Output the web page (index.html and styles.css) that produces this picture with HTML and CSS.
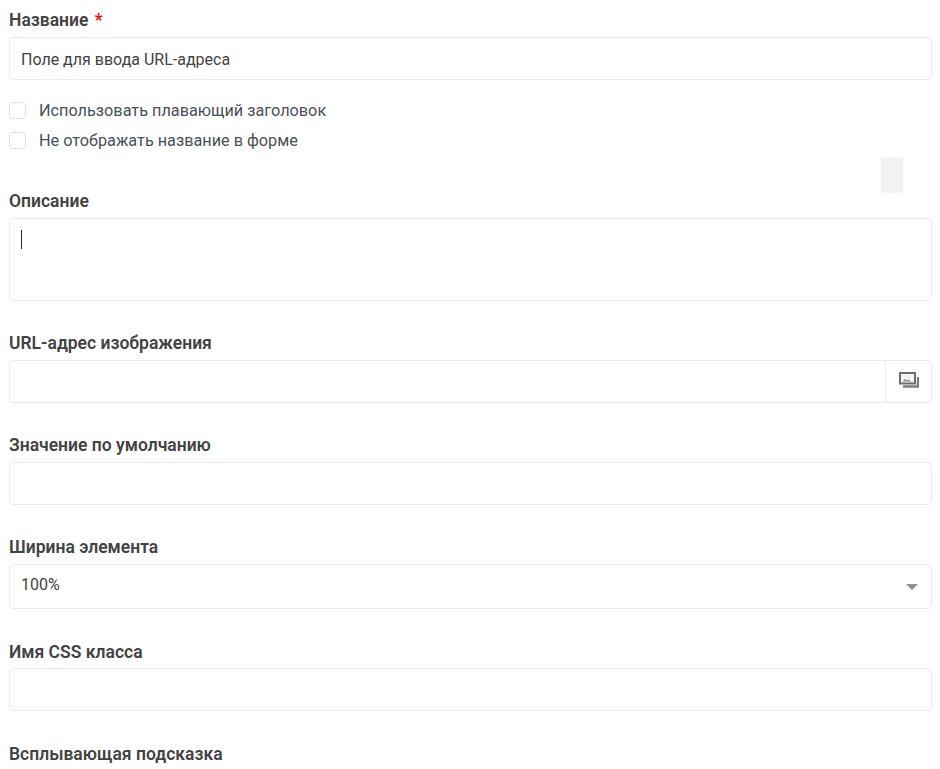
FILE: index.html
```html
<!DOCTYPE html>
<html lang="ru">
<head>
<meta charset="UTF-8" />
<meta name="viewport" content="width=device-width, initial-scale=1" />
<title>Поле для ввода URL-адреса</title>
<link rel="stylesheet" href="styles.css">
</head>
<body>

<form class="settings-form">
  <div class="field field-name">
    <label class="field-label">Название <span class="required">*</span></label>
    <div class="control">Поле для ввода URL-адреса</div>
  </div>

  <div class="check-group">
    <label class="check-row"><span class="check-box"></span>Использовать плавающий заголовок</label>
    <label class="check-row"><span class="check-box"></span>Не отображать название в форме</label>
  </div>

  <div class="field">
    <label class="field-label">Описание</label>
    <div class="control control-area"><span class="caret"></span></div>
  </div>

  <div class="field">
    <label class="field-label">URL-адрес изображения</label>
    <div class="control control-addon">
      <span class="addon-fill"></span>
      <span class="addon-btn">
        <svg width="20" height="16" viewBox="0 0 20 16" aria-hidden="true">
          <path d="M4 14.5h15V5" fill="none" stroke="#7d7d7d" stroke-width="2.4"/>
          <rect x="1" y="1" width="15" height="10.5" fill="#f4f4f4" stroke="#6f6f6f" stroke-width="2"/>
          <path d="M3.5 9.5l2.5-2.5 2 1.5 1.5-1 3 2z" fill="#8a8a8a"/>
        </svg>
      </span>
    </div>
  </div>

  <div class="field">
    <label class="field-label">Значение по умолчанию</label>
    <div class="control"></div>
  </div>

  <div class="field">
    <label class="field-label">Ширина элемента</label>
    <div class="control control-select">100%<span class="select-arrow"></span></div>
  </div>

  <div class="field field-css">
    <label class="field-label">Имя CSS класса</label>
    <div class="control"></div>
  </div>

  <div class="field">
    <label class="field-label">Всплывающая подсказка</label>
  </div>
</form>

<div class="drag-ghost"></div>

</body>
</html>
```

FILE: styles.css
```css
html, body {
  height: 769px;
  overflow: hidden;
}
body {
  margin: 0;
  background: #fff;
  font-family: Roboto, "Liberation Sans", sans-serif;
  color: #495057;
  position: relative;
}
.settings-form {
  padding: 8px 8px 0 9px;
}
.field {
  margin-bottom: 30px;
}
.field-name {
  margin-bottom: 0;
}
.field-label {
  display: block;
  height: 24px;
  line-height: 24px;
  margin-bottom: 5px;
  font-size: 17.5px;
  font-weight: 600;
  color: #434343;
}
.field-css {
  margin-bottom: 31px;
}
.field-css .field-label {
  padding-top: 1px;
  margin-bottom: 4px;
}
.required {
  color: #f00;
  margin-left: 2px;
}
.control {
  box-sizing: border-box;
  height: 43px;
  line-height: 43px;
  padding: 0 11px;
  border: 1px solid #e9ebf0;
  border-radius: 4px;
  font-size: 16px;
  color: #434343;
  background: #fff;
}
.control-area {
  height: 83px;
  padding-top: 11px;
  line-height: 1;
}
.caret {
  display: block;
  width: 1px;
  height: 19px;
  background: #222;
}
.control-addon {
  display: flex;
  padding: 0;
}
.addon-fill {
  flex: 1;
}
.addon-btn {
  width: 44px;
  padding: 0 0 3px 1px;
  display: flex;
  align-items: center;
  justify-content: center;
  border-left: 1px solid #e9ebf0;
}
.control-select {
  height: 45px;
  line-height: 39px;
  position: relative;
}
.select-arrow {
  position: absolute;
  right: 13px;
  top: 19px;
  border-left: 6px solid transparent;
  border-right: 6px solid transparent;
  border-top: 6px solid #8f8f8f;
}
.check-group {
  padding-top: 15px;
  height: 109px;
  box-sizing: border-box;
}
.check-row {
  display: flex;
  align-items: center;
  gap: 13px;
  height: 30px;
  font-size: 16.25px;
  color: #495057;
}
.check-box {
  box-sizing: border-box;
  width: 17px;
  height: 17px;
  border: 1px solid #dcdfe6;
  border-radius: 4px;
  background: #fff;
}
.drag-ghost {
  position: absolute;
  left: 881px;
  top: 157px;
  width: 22px;
  height: 36px;
  background: #f2f2f2;
  border-radius: 0 0 3px 3px;
}
```
